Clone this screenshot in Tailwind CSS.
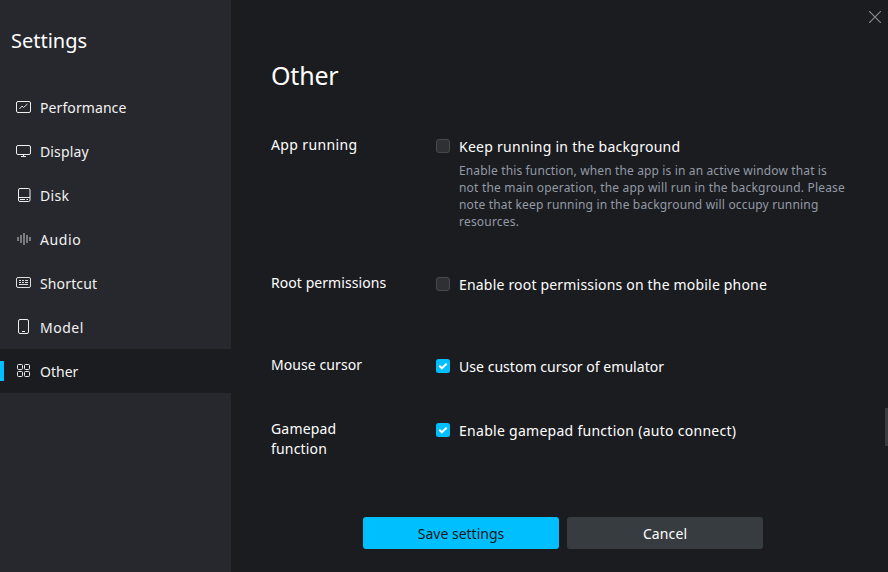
<!DOCTYPE html>
<html lang="en">
<head>
<meta charset="utf-8">
<title>Settings</title>
<script src="https://cdn.jsdelivr.net/npm/@tailwindcss/browser@4"></script>
</head>
<body class="w-[888px] h-[572px] overflow-hidden bg-[#1b1c20] text-white font-['Noto_Sans','Open_Sans',sans-serif] text-[14px] leading-5">
<div class="relative flex h-full">
  <aside class="w-[231px] h-full bg-[#27282d] pt-[26px]">
    <h1 class="pl-[11px] h-[30px] text-[20px] leading-[30px]"><span>Settings</span></h1>
    <nav class="mt-[29px] text-[#f2f2f2]">
      <a class="flex h-11 items-center pl-4"><svg class="w-4 h-4 mr-2 shrink-0" viewBox="0 0 16 16" fill="none" stroke="#eee"><rect x=".5" y="2.5" width="14" height="11" rx="1.5"/><path d="M3.500 10l2.500-3 1.500 1.500L11.500 5" stroke-width=".9"/></svg><span class="pt-0.5 tracking-[0.09px]">Performance</span></a>
      <a class="flex h-11 items-center pl-4"><svg class="w-4 h-4 mr-2 shrink-0" viewBox="0 0 16 16" fill="none" stroke="#eee"><rect x=".5" y="2.500" width="14" height="9" rx="1.500"/><path d="M7.500 11.500v2M5 13.500h5"/></svg><span class="pt-0.5 tracking-[0.14px]">Display</span></a>
      <a class="flex h-11 items-center pl-4"><svg class="w-4 h-4 mr-2 shrink-0" viewBox="0 0 16 16" fill="none" stroke="#eee"><rect x="2.500" y="1.500" width="11.500" height="13" rx="1.500"/><path d="M2.500 10.500h11.500M4 12.500h5M10.500 12.500h1.500"/></svg><span class="pt-0.5 tracking-[0.3px]">Disk</span></a>
      <a class="flex h-11 items-center pl-4"><svg class="w-4 h-4 mr-2 shrink-0" viewBox="0 0 16 16" fill="none" stroke="#b0b0b2" stroke-width="1.200"><path d="M2 6v4M5 4v8M8 2v12M11 4v8M14 6v4"/></svg><span class="pt-0.5 tracking-[0.6px]">Audio</span></a>
      <a class="flex h-11 items-center pl-4"><svg class="w-4 h-4 mr-2 shrink-0" viewBox="0 0 16 16" fill="none" stroke="#ddd"><rect x=".5" y="2.500" width="14" height="10" rx="1.500"/><path d="M3 5.500h2M6 5.500h2M9 5.500h3M3 7.500h2M6 7.500h2M9 7.500h3M3 9.500h9"/></svg><span class="pt-0.5 tracking-[0.14px]">Shortcut</span></a>
      <a class="flex h-11 items-center pl-4"><svg class="w-4 h-4 mr-2 shrink-0" viewBox="0 0 16 16" fill="none" stroke="#eee"><rect x="2.500" y=".500" width="10" height="14" rx="1.500"/><path d="M6 12.500h3"/></svg><span class="pt-0.5 tracking-[0.5px]">Model</span></a>
      <a class="flex h-11 items-center bg-[#1b1c20]"><i class="w-1 h-5 mr-3 bg-[#00bfff]"></i><svg class="w-4 h-4 mr-2 shrink-0" viewBox="0 0 16 16" fill="none" stroke="#eee"><rect x="1.500" y="1.500" width="5" height="5" rx="1"/><rect x="8.500" y="1.500" width="5" height="5" rx="1"/><rect x="1.500" y="8.500" width="5" height="5" rx="1"/><rect x="8.500" y="8.500" width="5" height="5" rx="1"/></svg><span class="pt-0.5">Other</span></a>
    </nav>
  </aside>
  <main class="flex-1 pl-10 pt-[57px]">
    <h2 class="h-[38px] text-[25px] leading-[37px] tracking-[-0.2px]"><span>Other</span></h2>
    <section class="flex h-[138px] mt-10 items-start">
      <div class="w-[165px] tracking-[0.36px]"><span>App running</span></div>
      <div class="pt-0.5">
        <label class="flex items-start"><i class="w-3.5 h-3.5 mt-0.5 mr-[9px] rounded-[3px] bg-[#2f3034] border border-[#48494d]"></i><span class="tracking-[0.27px]">Keep running in the background</span></label>
        <p class="pl-[23px] mt-[5px] text-[12px] leading-[17px] text-[#929aa5] whitespace-nowrap"><span class="tracking-[0.14px]">Enable this function, when the app is in an active window that is</span><br><span class="tracking-[0.19px]">not the main operation, the app will run in the background. Please</span><br><span class="tracking-[0.17px]">note that keep running in the background will occupy running</span><br><span class="tracking-[0.2px]">resources.</span></p>
      </div>
    </section>
    <section class="flex h-[82px] items-start">
      <div class="w-[165px] tracking-[0.06px]"><span>Root permissions</span></div>
      <label class="flex items-start pt-0.5"><i class="w-3.5 h-3.5 mt-0.5 mr-[9px] rounded-[3px] bg-[#2f3034] border border-[#48494d]"></i><span class="tracking-[0.19px]">Enable root permissions on the mobile phone</span></label>
    </section>
    <section class="flex h-16 items-start">
      <div class="w-[165px] tracking-[0.08px]"><span>Mouse cursor</span></div>
      <label class="flex items-start pt-0.5"><svg class="w-3.5 h-3.5 mt-0.5 mr-[9px]" viewBox="0 0 14 14"><rect width="14" height="14" rx="2.500" fill="#00bfff"/><path d="M3.300 6.800l2.600 2.500 4.800-4.700" fill="none" stroke="#fff" stroke-width="2"/></svg><span class="tracking-[0.04px]">Use custom cursor of emulator</span></label>
    </section>
    <section class="flex h-[98px] items-start">
      <div class="w-[165px] tracking-[0.18px]"><span>Gamepad</span><br><span>function</span></div>
      <label class="flex items-start pt-0.5"><svg class="w-3.5 h-3.5 mt-0.5 mr-[9px]" viewBox="0 0 14 14"><rect width="14" height="14" rx="2.500" fill="#00bfff"/><path d="M3.300 6.800l2.600 2.500 4.800-4.700" fill="none" stroke="#fff" stroke-width="2"/></svg><span class="tracking-[0.28px]">Enable gamepad function (auto connect)</span></label>
    </section>
    <div class="flex gap-2 pl-[92px]">
      <button class="w-[196px] h-8 pt-0.5 rounded-[3px] bg-[#00bfff] text-[#101820]"><span>Save settings</span></button>
      <button class="w-[196px] h-8 pt-0.5 rounded-[3px] bg-[#373c40] tracking-[0.1px]"><span>Cancel</span></button>
    </div>
  </main>
  <svg class="absolute left-[869px] top-[11px] w-3 h-3" viewBox="0 0 12 12" stroke="#888a8d" stroke-width="1.200"><path d="M0 0l12 12M12 0L0 12"/></svg>
  <i class="absolute left-[885px] top-[408px] w-[3px] h-[38px] bg-[#3b3c40]"></i>
</div>
</body>
</html>
